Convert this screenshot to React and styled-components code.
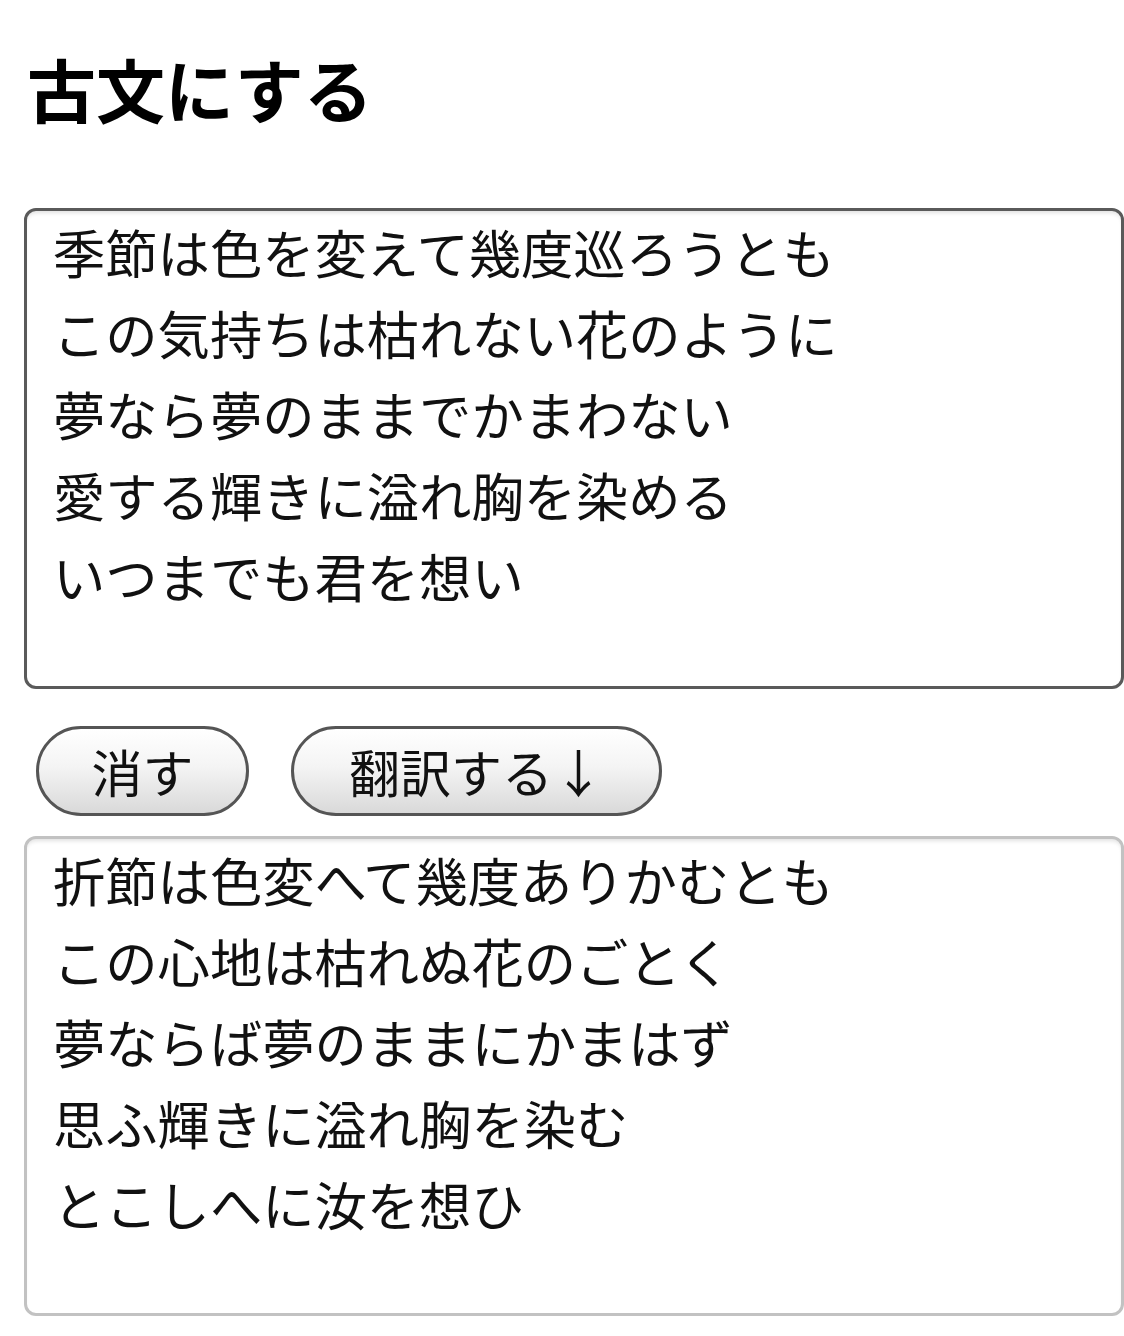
import React from 'react';
import styled, { createGlobalStyle } from 'styled-components';

const GlobalStyle = createGlobalStyle`
  body {
    margin: 0;
    background: #ffffff;
    font-family: "Noto Sans CJK JP", "Noto Sans", sans-serif;
  }
`;

const Page = styled.div`
  width: 1124px;
  padding: 0 0 0 24px;
  box-sizing: border-box;
  display: flex;
  flex-direction: column;
`;

const Title = styled.h1`
  margin: 39px 0 0 3px;
  height: 98px;
  font-size: 69px;
  line-height: 98px;
  font-weight: 700;
  color: #000;
`;

const TextBox = styled.textarea`
  display: block;
  width: 1100px;
  height: ${p => p.$height}px;
  margin-top: ${p => p.$top}px;
  box-sizing: border-box;
  padding: 0 26px;
  border: 3px solid ${p => (p.$focused ? '#5a5a5a' : '#c2c2c2')};
  border-radius: 12px;
  box-shadow: inset 0 4px 4px -2px rgba(0, 0, 0, 0.12);
  font-family: "Noto Sans CJK JP", sans-serif;
  font-size: 52.3px;
  font-weight: 400;
  line-height: 81px;
  color: #111;
  resize: none;
  outline: none;
  overflow: hidden;
  background: #fff;
`;

const ButtonRow = styled.div`
  display: flex;
  gap: 42px;
  margin: 37px 0 0 12px;
`;

const PillButton = styled.button`
  width: ${p => p.$width}px;
  height: 90px;
  box-sizing: border-box;
  border: 3px solid #555;
  border-radius: 45px;
  background: linear-gradient(#ffffff 0%, #f4f4f4 45%, #d9d9d9 100%);
  font-family: "Noto Sans CJK JP", sans-serif;
  font-size: 51px;
  font-weight: 400;
  color: #111;
  padding: 0;
  line-height: 1;
  cursor: pointer;
`;

const original = [
  '季節は色を変えて幾度巡ろうとも',
  'この気持ちは枯れない花のように',
  '夢なら夢のままでかまわない',
  '愛する輝きに溢れ胸を染める',
  'いつまでも君を想い',
].join('\n');

const classical = [
  '折節は色変へて幾度ありかむとも',
  'この心地は枯れぬ花のごとく',
  '夢ならば夢のままにかまはず',
  '思ふ輝きに溢れ胸を染む',
  'とこしへに汝を想ひ',
].join('\n');

export default function App() {
  return (
    <Page>
      <GlobalStyle />
      <Title>古文にする</Title>
      <TextBox $focused $top={71} $height={481} defaultValue={original} />
      <ButtonRow>
        <PillButton $width={213}>消す</PillButton>
        <PillButton $width={371}>翻訳する↓</PillButton>
      </ButtonRow>
      <TextBox $top={20} $height={480} readOnly defaultValue={classical} />
    </Page>
  );
}
